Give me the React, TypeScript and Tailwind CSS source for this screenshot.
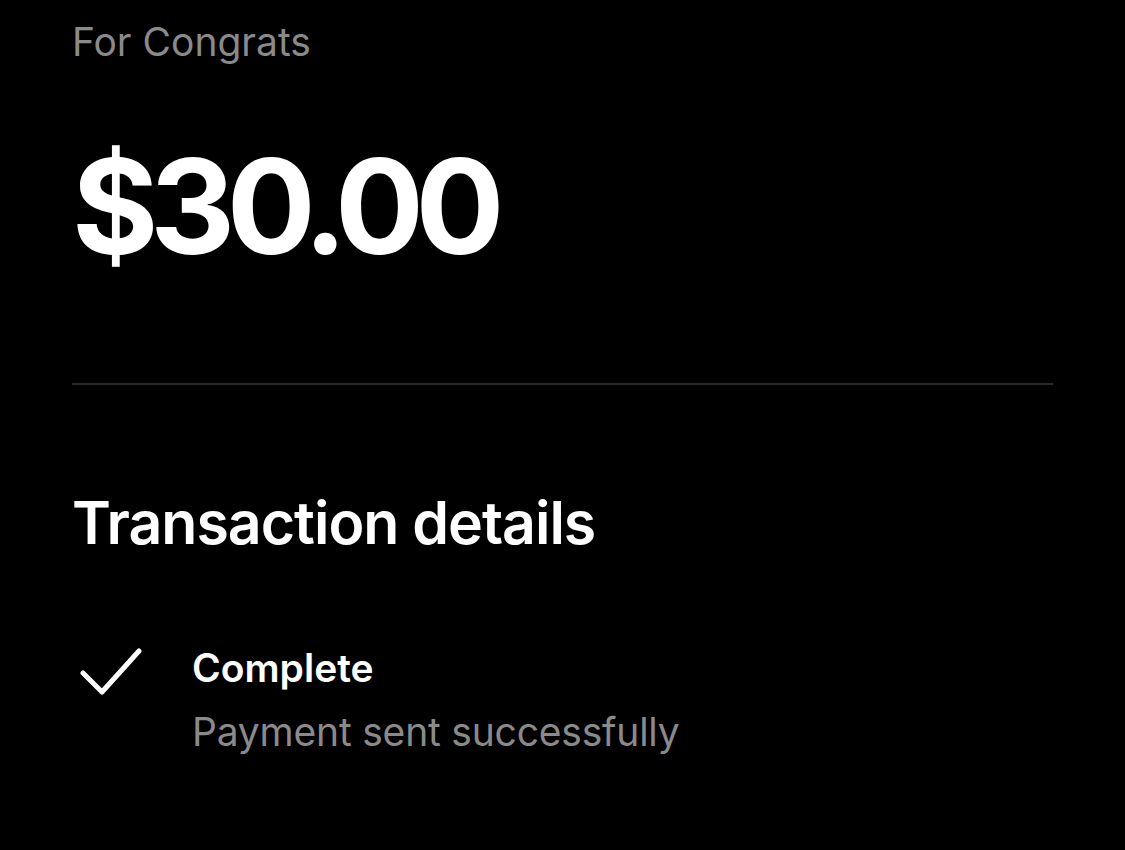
import React from "react";

export default function App() {
  return (
    <div
      className="w-[1125px] h-[850px] bg-black overflow-hidden text-white"
      style={{ fontFamily: "Inter, 'Noto Sans', sans-serif" }}
    >
      <div className="pl-[72px] pr-[72px]">
        <div className="pt-[16px] text-[39px] leading-[52px] text-[#8a8a8a]">For Congrats</div>
        <div className="mt-[72px] text-[132px] leading-[132px] font-bold tracking-[-8.5px]">$30.00</div>
        <div className="mt-[111px] h-[2px] bg-[#2a2a2a]" />
        <div className="mt-[102px] text-[59px] leading-[72px] font-semibold tracking-[-1px]">Transaction details</div>
        <div className="mt-[85px] flex">
          <div className="w-[120px] pt-[4px] pl-[8px]">
            <svg width="62" height="48" viewBox="0 0 62 48" fill="none">
              <path d="M3 25 L22 44 L59 3" stroke="white" strokeWidth="5" strokeLinecap="round" strokeLinejoin="round" />
            </svg>
          </div>
          <div className="flex flex-col">
            <div className="text-[39px] leading-[48px] font-semibold">Complete</div>
            <div className="mt-[16px] text-[39px] leading-[48px] tracking-[-0.2px] text-[#8a8a8a]">Payment sent successfully</div>
          </div>
        </div>
      </div>
    </div>
  );
}
